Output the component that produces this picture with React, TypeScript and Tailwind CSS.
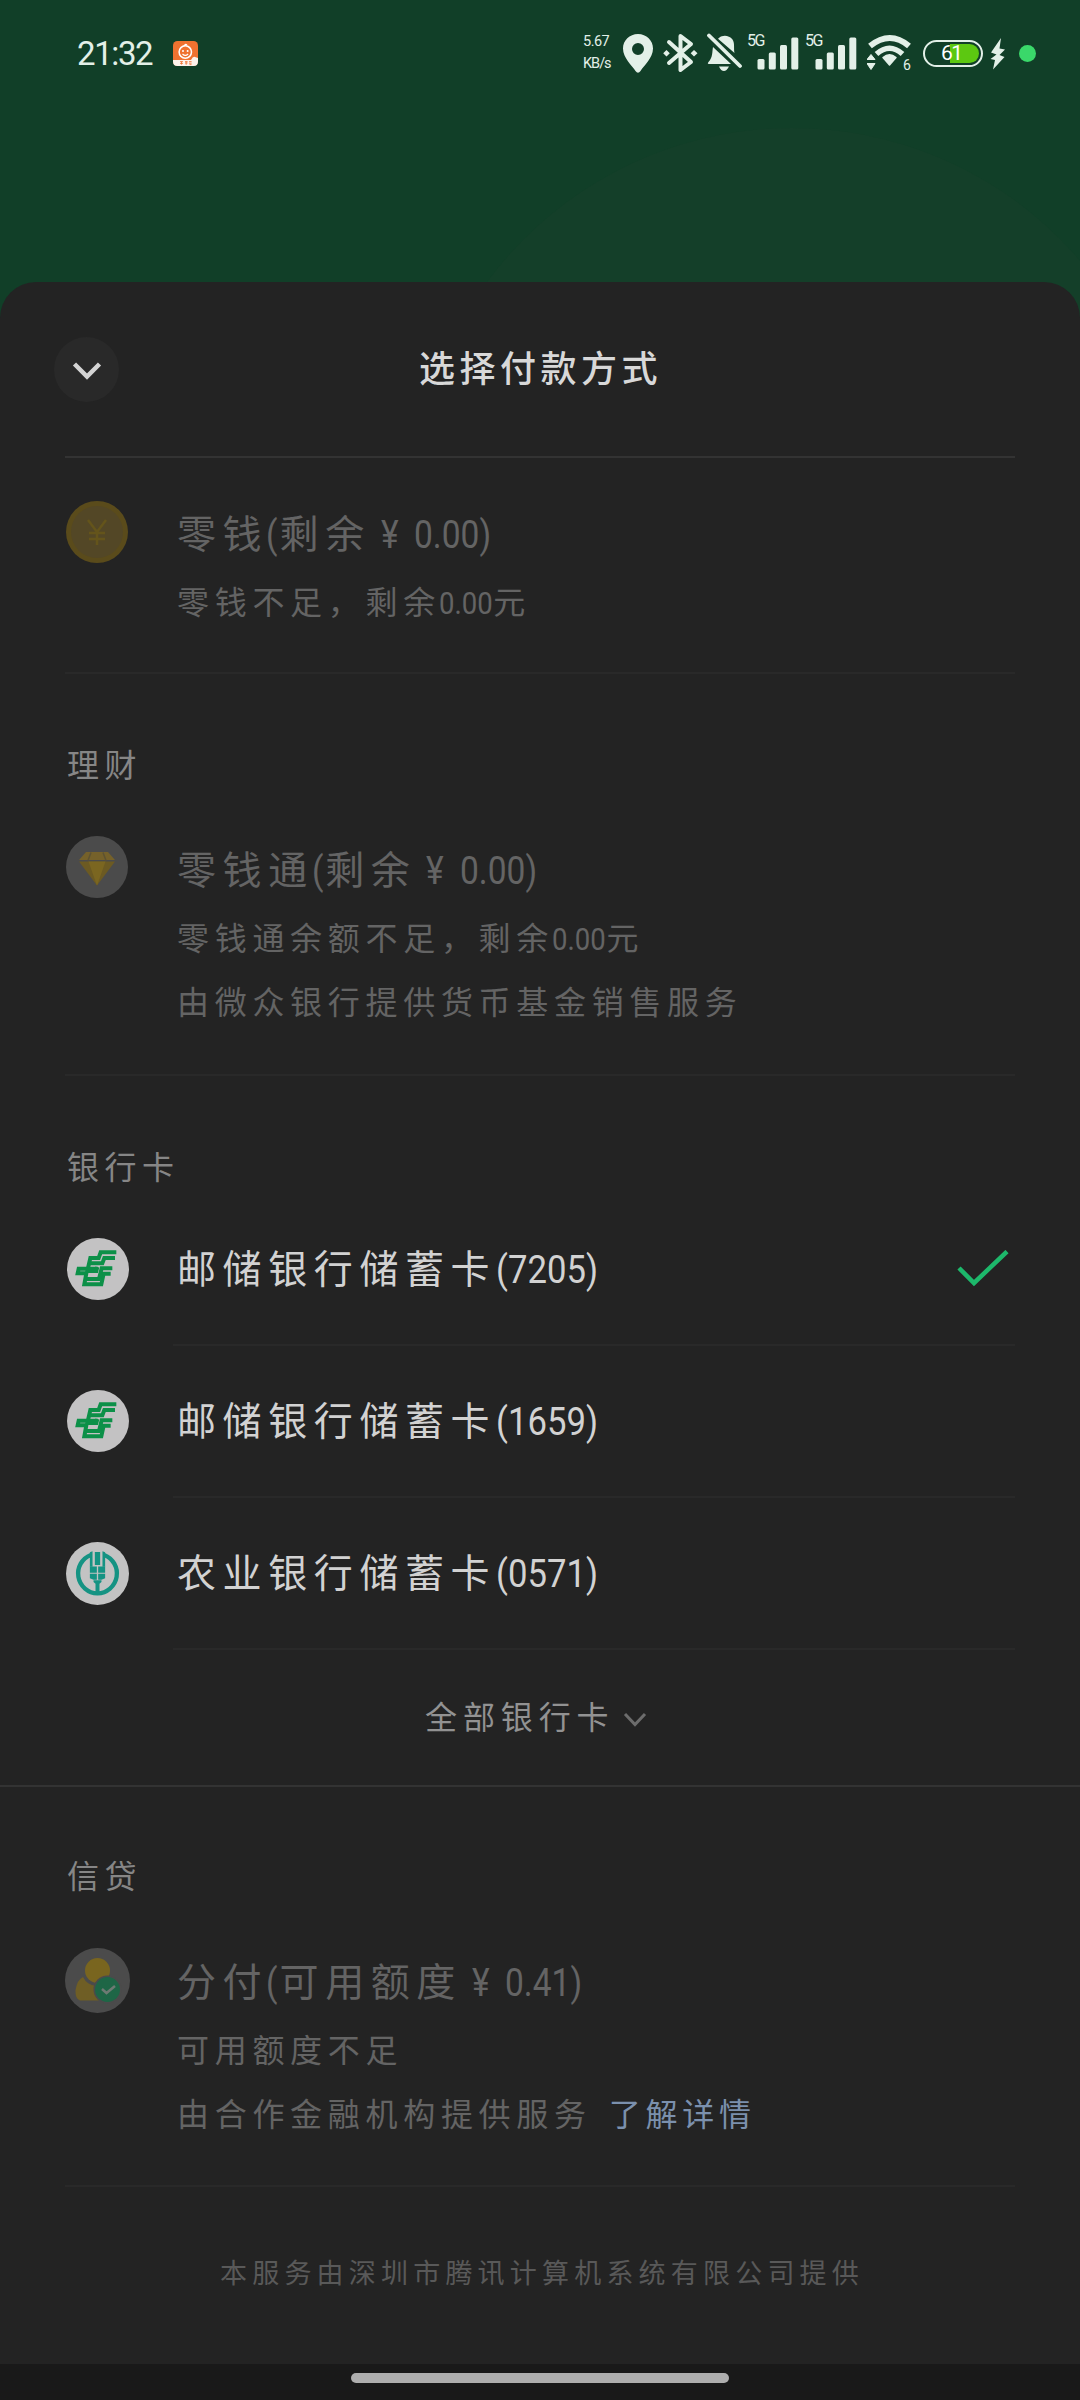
import React from 'react';

const ink = '#e3f0e8';

function AppBadge() {
  return (
    <svg width="25" height="25" viewBox="0 0 25 25" className="ml-[22px]">
      <rect width="25" height="25" rx="4.5" fill="#ef7230" />
      <path d="M0 19 H18 Q20 15 22 16 L25 17 V20.5 Q25 25 20.5 25 H4.5 Q0 25 0 20.5 Z" fill="#fdf3ec" />
      <circle cx="12.3" cy="11" r="6.2" fill="none" stroke="#fff" strokeWidth="1.5" />
      <path d="M11 5 Q12 2.5 14 4" fill="none" stroke="#fff" strokeWidth="1.2" />
      <circle cx="10" cy="10" r="1" fill="#fff" />
      <circle cx="14.6" cy="10" r="1" fill="#fff" />
      <path d="M9.5 13 Q12.3 15.8 15.1 13" fill="none" stroke="#fff" strokeWidth="1.2" />
      <path d="M7 20.6h3M8.500 20.600v3M7 22.400h3M12 20.600h2.600M12 22h2.600M13.200 20.600v3.200M16 20.600h2.600M16 22.200h2.600M16.500 23.600h2" stroke="#ef7230" strokeWidth="0.8" />
    </svg>
  );
}

function SignalIcon() {
  return (
    <div className="relative h-[46px] w-[52px]">
      <span className="absolute left-0 top-[3px] text-[16px] leading-[16px] tracking-[-1.500px]">5G</span>
      <svg width="52" height="46" viewBox="0 0 52 46" fill={ink}>
        <rect x="10.500" y="29" width="7" height="10.500" rx="1.500" />
        <rect x="21.800" y="22.500" width="7" height="17" rx="1.500" />
        <rect x="33" y="15" width="7" height="24.500" rx="1.500" />
        <rect x="44.300" y="7.500" width="7" height="32" rx="1.500" />
      </svg>
    </div>
  );
}

function StatusBar() {
  return (
    <div className="flex h-[106px] items-center pl-[77px] pr-[44px] text-[#e3f0e8]">
      <span className="w-[74px] whitespace-nowrap text-[33px] leading-none tracking-[-1.400px]">21:32</span>
      <AppBadge />
      <div className="ml-auto flex h-[46px] items-center">
        <div className="flex w-[29px] flex-col gap-[8px] whitespace-nowrap text-[14.500px] leading-[14px] tracking-[-0.500px]">
          <span>5.67</span>
          <span className="tracking-[-1px]">KB/s</span>
        </div>
        <svg width="30" height="46" viewBox="0 0 30 46" className="ml-[11px]">
          <path fillRule="evenodd" fill={ink} d="M15 4C6.500 4 0 10.500 0 18.500C0 28 9 35.500 12.500 41Q15 44.500 17.500 41C21 35.500 30 28 30 18.500C30 10.500 23.500 4 15 4ZM15 13a6 6 0 1 1 0 12a6 6 0 1 1 0-12Z" />
        </svg>
        <svg width="35" height="46" viewBox="0 0 35 46" className="ml-[10px]">
          <path d="M6 12 L28 32 L17.500 40 V6 L28 14 L6 33" fill="none" stroke={ink} strokeWidth="4" strokeLinejoin="round" strokeLinecap="round" />
          <path d="M3.500 20l3.300 3.300l-3.300 3.300L0.200 23.300zM31 20l3.500 3.300l-3.500 3.300l-3.300-3.300z" fill={ink} />
        </svg>
        <svg width="36" height="46" viewBox="0 0 36 46" className="ml-[9px]">
          <path d="M12.500 7.500C15 5 22 4.500 25.500 9.500C28 13 26.500 18 27.500 23L11 8.700ZM6 17L24 34H1.500Q0 33.500 1.500 32C6 27 5 22 6 17ZM12 36.500H22Q19.500 41 17 41Q14 41 12 36.500Z" fill={ink} />
          <path d="M2 5.500L33 36" stroke={ink} strokeWidth="3.800" strokeLinecap="round" />
        </svg>
        <div className="ml-[4px]"><SignalIcon /></div>
        <div className="ml-[6px]"><SignalIcon /></div>
        <svg width="46" height="46" viewBox="0 0 46 46" className="ml-[10px]">
          <path d="M3 16Q23 0 42 16" fill="none" stroke={ink} strokeWidth="6" />
          <path d="M9.500 24Q22.500 12.500 35.500 24" fill="none" stroke={ink} strokeWidth="5.500" />
          <path d="M16 27.500Q22.500 22 29 27.500L22.500 35Z" fill={ink} stroke={ink} strokeWidth="1.500" strokeLinejoin="round" />
          <path d="M0 29.500H8L4 24.500ZM0 33.500H8L4 39.500Z" fill={ink} stroke={ink} strokeWidth="1" strokeLinejoin="round" />
          <text x="36" y="40" fontSize="14" fill={ink}>6</text>
        </svg>
        <div className="relative ml-[10px] h-[27px] w-[60px] rounded-full border-[2.500px] border-[#e3f0e8] p-[2px]">
          <div className="ml-auto h-full w-[29px] rounded-r-full bg-[#5cc811]" />
          <span className="absolute left-[16px] top-[1px] text-[21px] leading-[21px] tracking-[-1.500px] text-white">61</span>
        </div>
        <svg width="16" height="46" viewBox="0 0 16 46" className="ml-[7px]">
          <path d="M11 8L1 22.500L6.500 24.500L0.500 29L5 30L3 39.500L14.500 27L9.500 25L15 19.500L9.500 18.500Z" fill={ink} />
        </svg>
        <div className="ml-[13px] h-[17px] w-[17px] rounded-full bg-[#3ad86a]" />
      </div>
    </div>
  );
}

function CoinIcon() {
  return (
    <svg width="62" height="62" viewBox="0 0 62 62">
      <circle cx="31" cy="31" r="31" fill="#5a4b1b" />
      <circle cx="31" cy="31" r="26" fill="#534726" />
      <path d="M22 19L31 31L40 19M31 31V44M23 32H39M23 38H39" fill="none" stroke="#64541b" strokeWidth="2.500" />
    </svg>
  );
}

function DiamondIcon() {
  return (
    <svg width="62" height="62" viewBox="0 0 62 62">
      <circle cx="31" cy="31" r="31" fill="#4b4b4b" />
      <path d="M20 16H42L49 24H13Z" fill="#75612a" />
      <path d="M13 25.500H49L31 49.500Z" fill="#6c5a22" />
      <path d="M22.500 25.500H39.500L31 49.500Z" fill="#7b6620" />
      <path d="M25 16.500L22 24.500M37 16.500L40 24.500" stroke="#5d5232" strokeWidth="1.500" />
    </svg>
  );
}

function PostalBankIcon() {
  return (
    <svg width="62" height="62" viewBox="32 25 186 186">
      <circle cx="125" cy="118" r="93" fill="#c3c2c3" />
      <g fill="none" stroke="#0c9048" strokeWidth="12">
        <path d="M180 68H133L127 85H102L93 124H120L123 112" />
        <path d="M176 85H144L138 101H99" />
        <path d="M125 117H67L64 131H90L84 164H135L142 132H163" />
        <path d="M168 116H136L128 148H91" />
      </g>
    </svg>
  );
}

function AgriBankIcon() {
  return (
    <svg width="63" height="63" viewBox="29 935 190 190">
      <circle cx="124" cy="1030" r="95" fill="#c3c3c3" />
      <path d="M104 974A60 60 0 0 0 124 1090A60 60 0 0 0 144 974" fill="none" stroke="#159383" strokeWidth="13" />
      <path d="M101 966L109 963V1010H101ZM147 966L139 963V1010H147Z" fill="#159383" />
      <path d="M116 965H132V1004H116ZM101 1009H122V1028H101ZM126 1009H147V1028H126ZM101 1031H122V1049H112L101 1044ZM126 1031H147V1044L136 1049H126ZM112 1050H136V1056L130 1061V1090H118V1061L112 1056Z" fill="#159383" />
    </svg>
  );
}

function CreditIcon() {
  return (
    <svg width="65" height="65" viewBox="0 0 65 65">
      <circle cx="32.500" cy="32.500" r="32.500" fill="#4b4b4b" />
      <path d="M18 29Q22 37 31 38Q27 46 34 52.500H15Q10 51 10.500 42Q12 32 18 29Z" fill="#6f5e25" />
      <circle cx="32.500" cy="22.500" r="12.500" fill="#79651f" />
      <circle cx="42.500" cy="41.500" r="14" fill="#4b4b4b" />
      <circle cx="42.500" cy="41.500" r="12.500" fill="#1e6646" />
      <path d="M37 41L41.500 45L50 38" fill="none" stroke="#6d7a73" strokeWidth="2.500" />
    </svg>
  );
}

function Rule({ color = 'bg-[#292929]', className = '' }: { color?: string; className?: string }) {
  return <div className={`h-[2px] shrink-0 ${color} ${className}`} />;
}

/* Digits and brackets, condensed to sit beside the Chinese glyphs. */
function Num({ children, className = '' }: { children: React.ReactNode; className?: string }) {
  return <span className={`inline-block origin-left scale-x-[0.86] tracking-normal ${className}`}>{children}</span>;
}

function Title({ children }: { children: React.ReactNode }) {
  return <div className="flex h-[60px] items-center whitespace-pre text-[39px] leading-[60px] tracking-[6.600px]">{children}</div>;
}

function Note({ children }: { children: React.ReactNode }) {
  return <div className="flex h-[64px] items-center whitespace-pre text-[32px] leading-[64px] tracking-[5.700px]">{children}</div>;
}

function Section({ children }: { children: React.ReactNode }) {
  return <div className="flex h-[60px] items-center whitespace-pre pl-[67px] text-[32px] tracking-[5.500px] text-[#868686]">{children}</div>;
}

/* Account name followed by the bracketed balance. */
function BalanceTitle({ name, label, amount }: { name: string; label: string; amount: string }) {
  return (
    <Title>
      {name}
      <Num className="-ml-[2px]">(</Num>
      {label}
      <Num className="ml-[10px] mr-[13px]">¥</Num>
      <Num>{amount})</Num>
    </Title>
  );
}

function CardRow({ icon, name, digits, selected }: { icon: React.ReactNode; name: string; digits: string; selected?: boolean }) {
  return (
    <div className="flex h-[150px] items-center pl-[65px] text-[#d2d2d2]">
      <div className="flex w-[65px] justify-center">{icon}</div>
      <div className="ml-[47px] pt-[2px]">
        <Title>
          {name}
          <Num className="scale-x-[0.89]">({digits})</Num>
        </Title>
      </div>
      {selected && (
        <svg width="52" height="38" viewBox="0 0 52 38" className="ml-auto mr-[71px]">
          <path d="M2 18L17 33L50 1.500" fill="none" stroke="#1db86b" strokeWidth="4.500" />
        </svg>
      )}
    </div>
  );
}

export default function App() {
  return (
    <div
      className="relative flex h-[2400px] w-[1080px] flex-col overflow-hidden bg-[#113f28] font-normal"
      style={{ fontFamily: 'Roboto, "Noto Sans CJK SC", sans-serif' }}
    >
      <div className="absolute left-[413px] top-[128px] h-[758px] w-[758px] rounded-full bg-[#143f29]" />
      <div className="relative h-[282px]">
        <StatusBar />
      </div>

      <div className="relative flex h-[2082px] flex-col rounded-t-[36px] bg-[#232323]">
        <div className="flex h-[174px] items-center px-[54px]">
          <div className="flex h-[65px] w-[65px] items-center justify-center rounded-full bg-[#292929]">
            <svg width="30" height="20" viewBox="0 0 30 20" className="mt-[3px]">
              <path d="M2.500 3L15 15.500L27.500 3" fill="none" stroke="#d4d4d4" strokeWidth="4.500" />
            </svg>
          </div>
          <div className="ml-[300px] whitespace-nowrap pt-[2px] text-[36px] font-medium tracking-[4.500px] text-[#d8d8d8]">选择付款方式</div>
        </div>
        <Rule color="bg-[#333333]" className="mx-[65px]" />

        <div className="flex h-[214px] pl-[66px] pt-[43px] text-[#646464]">
          <CoinIcon />
          <div className="ml-[49px] pt-[4px]">
            <BalanceTitle name="零钱" label="剩余" amount="0.00" />
            <div className="mt-[6px]">
              <Note>
                零钱不足，剩余<Num className="-ml-[2px]">0.00</Num><span className="-ml-[8px]">元</span>
              </Note>
            </div>
          </div>
        </div>
        <Rule className="mx-[65px]" />

        <div className="pt-[62px]">
          <Section>理财</Section>
        </div>
        <div className="flex h-[278px] pl-[66px] pt-[40px] text-[#646464]">
          <DiamondIcon />
          <div className="ml-[49px] pt-[5px]">
            <BalanceTitle name="零钱通" label="剩余" amount="0.00" />
            <div className="mt-[6px]">
              <Note>
                零钱通余额不足，剩余<Num className="-ml-[2px]">0.00</Num><span className="-ml-[8px]">元</span>
              </Note>
              <Note>由微众银行提供货币基金销售服务</Note>
            </div>
          </div>
        </div>
        <Rule className="mx-[65px]" />

        <div className="pt-[62px]">
          <Section>银行卡</Section>
        </div>
        <div className="-mt-[4px]">
          <CardRow icon={<PostalBankIcon />} name="邮储银行储蓄卡" digits="7205" selected />
          <Rule className="ml-[173px] mr-[65px]" />
          <CardRow icon={<PostalBankIcon />} name="邮储银行储蓄卡" digits="1659" />
          <Rule className="ml-[173px] mr-[65px]" />
          <CardRow icon={<AgriBankIcon />} name="农业银行储蓄卡" digits="0571" />
          <Rule className="ml-[173px] mr-[65px]" />
        </div>

        <div className="flex h-[135px] items-center pl-[425px] text-[32px] tracking-[5.900px] text-[#929292]">
          全部银行卡
          <svg width="24" height="16" viewBox="0 0 24 16" className="ml-[8px] mt-[5px]">
            <path d="M2 2L12 12.500L22 2" fill="none" stroke="#6c6c6c" strokeWidth="3" />
          </svg>
        </div>
        <Rule color="bg-[#333333]" />

        <div className="pt-[60px]">
          <Section>信贷</Section>
        </div>
        <div className="flex h-[278px] pl-[65px] pt-[41px] text-[#646464]">
          <CreditIcon />
          <div className="ml-[47px] pt-[5px]">
            <BalanceTitle name="分付" label="可用额度" amount="0.41" />
            <div className="mt-[6px]">
              <Note>可用额度不足</Note>
              <Note>
                由合作金融机构提供服务<span className="ml-[17px] tracking-[4.800px] text-[#7b90ad]">了解详情</span>
              </Note>
            </div>
          </div>
        </div>
        <Rule className="mx-[65px]" />
        <div className="flex h-[174px] items-center justify-center whitespace-nowrap pl-[4px] text-[27px] tracking-[5.200px] text-[#595959]">
          本服务由深圳市腾讯计算机系统有限公司提供
        </div>
      </div>

      <div className="relative flex h-[36px] justify-center bg-[#191919] pt-[9px]">
        <div className="h-[10px] w-[378px] rounded-full bg-[#aeaeae]" />
      </div>
    </div>
  );
}
